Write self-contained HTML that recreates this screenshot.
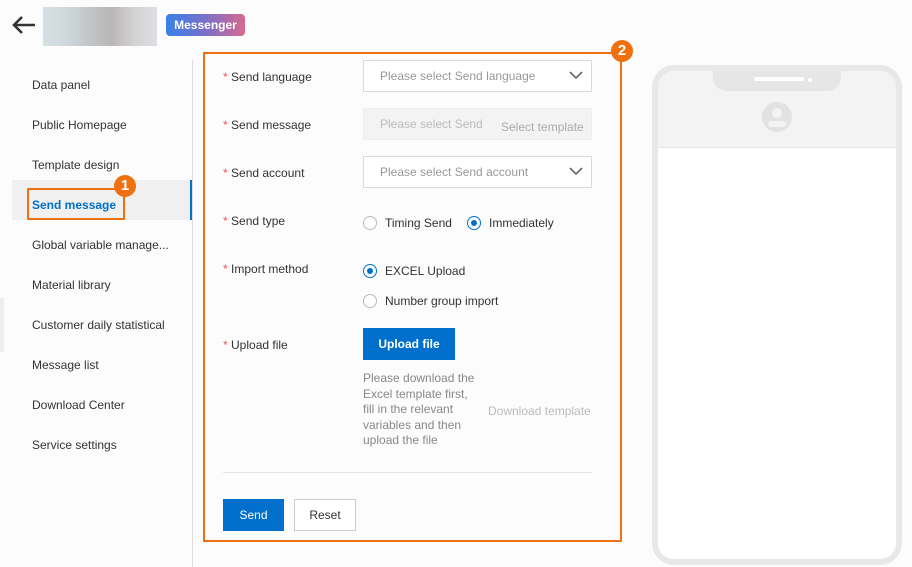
<!DOCTYPE html>
<html style="overflow:hidden;width:912px;height:567px"><head><meta charset="utf-8"><style>
*{margin:0;padding:0;box-sizing:border-box}
body{width:912px;height:567px;background:#fcfcfc;font-family:"Liberation Sans",Arial,sans-serif;font-size:12px;color:#333;position:relative;overflow:hidden}
.a{position:absolute}
.nav{left:32px;font-size:12px;color:#333}
.lbl{left:223px;color:#333}
.lbl::before{content:"* ";color:#e55}
.inp{left:363px;width:229px;height:32px;border:1px solid #d9d9d9;background:#fff;color:#999;padding:0 16px;line-height:30px}
.rad{width:14px;height:14px;border:1px solid #bbb;border-radius:50%;background:#fff}
.rad.on{border-color:#0070cc}
.rad.on::after{content:"";position:absolute;left:3px;top:3px;width:6px;height:6px;border-radius:50%;background:#0070cc}
.badge{width:22px;height:22px;border-radius:50%;background:#f07010;color:#fff;font-weight:bold;font-size:15px;text-align:center;line-height:22px}
</style></head><body>
<svg class="a" style="left:10px;top:14px" width="28" height="22" viewBox="0 0 28 22"><path d="M25 11H4M12 3L4 11l8 8" stroke="#333" stroke-width="2.6" fill="none"/></svg>
<div class="a" style="left:43px;top:7px;width:114px;height:39px;background:linear-gradient(90deg,#cdd8dc,#c4d0d6,#b5b8bc,#a9a4a4,#c8c8c8,#d6d8dc);opacity:.8"></div>
<div class="a" style="left:166px;top:14px;width:79px;height:22px;border-radius:4px;background:linear-gradient(90deg,#3a80e8,#7a70c8,#d86a90);color:#fff;font-weight:bold;font-size:12px;line-height:22px;text-align:center">Messenger</div>
<div class="a" style="left:192px;top:60px;width:1px;height:507px;background:#ddd"></div>
<div class="a" style="left:0;top:298px;width:4px;height:54px;background:#eee"></div>
<div class="a" style="left:12px;top:180px;width:180px;height:40px;background:#f0f0f0"></div>
<div class="a" style="left:190px;top:180px;width:2px;height:40px;background:#0070cc"></div>
<div class="a nav" style="top:78px">Data panel</div>
<div class="a nav" style="top:118px">Public Homepage</div>
<div class="a nav" style="top:158px">Template design</div>
<div class="a nav" style="top:198px;color:#0070cc;font-weight:bold">Send message</div>
<div class="a nav" style="top:238px">Global variable manage...</div>
<div class="a nav" style="top:278px">Material library</div>
<div class="a nav" style="top:318px">Customer daily statistical</div>
<div class="a nav" style="top:358px">Message list</div>
<div class="a nav" style="top:398px">Download Center</div>
<div class="a nav" style="top:438px">Service settings</div>
<div class="a" style="left:27px;top:188px;width:98px;height:32px;border:2px solid #f07010"></div>
<div class="a badge" style="left:114px;top:175px">1</div>

<div class="a" style="left:203px;top:52px;width:419px;height:490px;border:2.5px solid #f07010"></div>
<div class="a badge" style="left:611px;top:40px">2</div>

<div class="a lbl" style="top:70px">Send language</div>
<div class="a inp" style="top:60px">Please select Send language</div>
<svg class="a" style="left:569px;top:70px" width="14" height="10"><path d="M1 2l6 6 6-6" stroke="#555" stroke-width="1.5" fill="none"/></svg>
<div class="a lbl" style="top:118px">Send message</div>
<div class="a inp" style="top:108px;background:#f3f3f3;border-color:#eee;color:#bbb">Please select Send</div>
<div class="a" style="left:501px;top:120px;color:#aaa">Select template</div>
<div class="a lbl" style="top:166px">Send account</div>
<div class="a inp" style="top:156px">Please select Send account</div>
<svg class="a" style="left:569px;top:166px" width="14" height="10"><path d="M1 2l6 6 6-6" stroke="#555" stroke-width="1.5" fill="none"/></svg>
<div class="a lbl" style="top:214px">Send type</div>
<div class="a rad" style="left:363px;top:216px"></div>
<div class="a" style="left:385px;top:216px">Timing Send</div>
<div class="a rad on" style="left:467px;top:216px"></div>
<div class="a" style="left:489px;top:216px">Immediately</div>
<div class="a lbl" style="top:262px">Import method</div>
<div class="a rad on" style="left:363px;top:264px"></div>
<div class="a" style="left:385px;top:264px">EXCEL Upload</div>
<div class="a rad" style="left:363px;top:294px"></div>
<div class="a" style="left:385px;top:294px">Number group import</div>
<div class="a lbl" style="top:338px">Upload file</div>
<div class="a" style="left:363px;top:328px;width:92px;height:32px;background:#0070cc;color:#fff;text-align:center;line-height:32px;font-weight:bold">Upload file</div>
<div class="a" style="left:363px;top:371px;width:114px;line-height:15.5px;color:#888">Please download the Excel template first, fill in the relevant variables and then upload the file</div>
<div class="a" style="left:488px;top:404px;color:#bbb">Download template</div>
<div class="a" style="left:223px;top:472px;width:369px;height:1px;background:#e5e5e5"></div>
<div class="a" style="left:223px;top:499px;width:61px;height:32px;background:#0070cc;color:#fff;text-align:center;line-height:32px">Send</div>
<div class="a" style="left:294px;top:499px;width:62px;height:32px;border:1px solid #ccc;background:#fff;text-align:center;line-height:30px">Reset</div>

<div class="a" style="left:652px;top:65px;width:250px;height:500px;border:6px solid #e8e8e8;border-radius:22px;background:#fff;overflow:hidden">
<div style="height:77px;background:#f3f3f3;border-bottom:1px solid #e6e6e6;position:relative">
<div class="a" style="left:55px;top:0;width:128px;height:20px;background:#e6e6e6;border-radius:0 0 14px 14px"></div>
<div class="a" style="left:96px;top:6px;width:50px;height:4px;border-radius:2px;background:#fff"></div>
<div class="a" style="left:150px;top:7px;width:4px;height:4px;border-radius:50%;background:#fff"></div>
<div class="a" style="left:104px;top:31px;width:30px;height:30px;border-radius:50%;background:#e2e2e2"></div>
<div class="a" style="left:114px;top:37px;width:10px;height:10px;border-radius:50%;background:#f3f3f3"></div>
<div class="a" style="left:110px;top:50px;width:18px;height:6px;border-radius:3px;background:#f3f3f3"></div>
</div></div>
</body></html>
